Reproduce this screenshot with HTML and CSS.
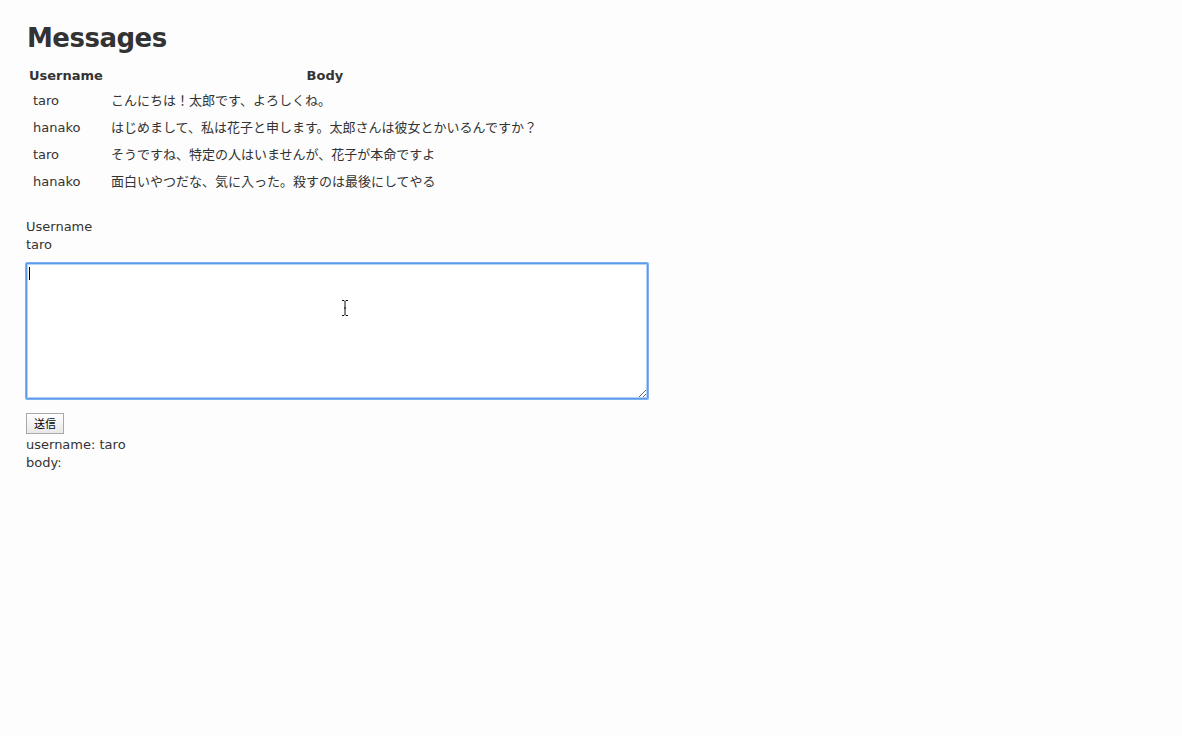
FILE: index.html
```html
<!DOCTYPE html>
<html lang="ja">
<head>
<meta charset="utf-8">
<title>Messages</title>
<link rel="stylesheet" href="styles.css">
</head>
<body>
<h1 class="title">Messages</h1>
<table class="messages">
  <thead>
    <tr><th class="col-user">Username</th><th class="col-body">Body</th></tr>
  </thead>
  <tbody>
    <tr><td class="cell-user">taro</td><td class="cell-body">こんにちは！太郎です、よろしくね。</td></tr>
    <tr><td class="cell-user">hanako</td><td class="cell-body">はじめまして、私は花子と申します。太郎さんは彼女とかいるんですか？</td></tr>
    <tr><td class="cell-user">taro</td><td class="cell-body">そうですね、特定の人はいませんが、花子が本命ですよ</td></tr>
    <tr><td class="cell-user">hanako</td><td class="cell-body">面白いやつだな、気に入った。殺すのは最後にしてやる</td></tr>
  </tbody>
</table>
<form class="composer">
  <div class="label">Username</div>
  <div class="value">taro</div>
  <div class="field">
    <textarea class="body-input"></textarea>
    <span class="caret"></span>
    <svg class="ibeam" width="8" height="16" viewBox="0 0 8 16"><path d="M1 0.5h2l1 1 1-1h2M4 1.5v13M1 15.5h2l1-1 1 1h2M3 8h2" fill="none" stroke="#111" stroke-width="1"/></svg>
  </div>
  <button type="button" class="send">送信</button>
  <div class="debug">username: taro</div>
  <div class="debug">body:</div>
</form>
</body>
</html>
```

FILE: styles.css
```css
html { background: #fdfdfd; }
body {
  margin: 0;
  padding: 22px 26px;
  font-family: "DejaVu Sans", Verdana, "Noto Sans CJK JP", sans-serif;
  color: #333;
  font-size: 14px;
}
.title {
  margin: 0 0 8px 1px;
  font-size: 26px;
  line-height: 32px;
  letter-spacing: -0.5px;
  font-weight: bold;
  color: #333;
}
.messages {
  border-collapse: collapse;
  font-size: 13px;
  line-height: 15px;
}
.messages th {
  font-weight: bold;
  padding: 6px 1px 4px 3px;
}
.messages th.col-user { text-align: left; }
.messages th.col-body { text-align: center; }
.messages td {
  padding: 6px 7px 6px 7px;
}
.composer {
  margin-top: 23px;
  font-size: 13px;
  line-height: 18px;
}
.field {
  position: relative;
  margin-top: 9px;
  width: 622px;
  height: 136px;
}
.body-input {
  box-sizing: border-box;
  display: block;
  width: 622px;
  height: 136px;
  margin: 0;
  border: 1px solid #5b9ae8;
  outline: none;
  box-shadow: 0 0 0 1px #7db1f2, inset 0 0 0 1px #b5d3f8;
  border-radius: 1px;
  background: #fff;
  resize: both;
}
.caret {
  position: absolute;
  left: 3px;
  top: 4px;
  width: 1px;
  height: 13px;
  background: #000;
}
.ibeam {
  position: absolute;
  left: 315px;
  top: 37px;
}
.send {
  display: block;
  margin: 14px 0 2px;
  padding: 0 7px;
  height: 21px;
  font-family: "Noto Sans CJK JP", sans-serif;
  font-size: 11px;
  line-height: 19px;
  color: #000;
  background: linear-gradient(#fff, #e8e8e8);
  border: 1px solid #a8a8a8;
  border-radius: 0;
}
.debug { color: #333; }
```
